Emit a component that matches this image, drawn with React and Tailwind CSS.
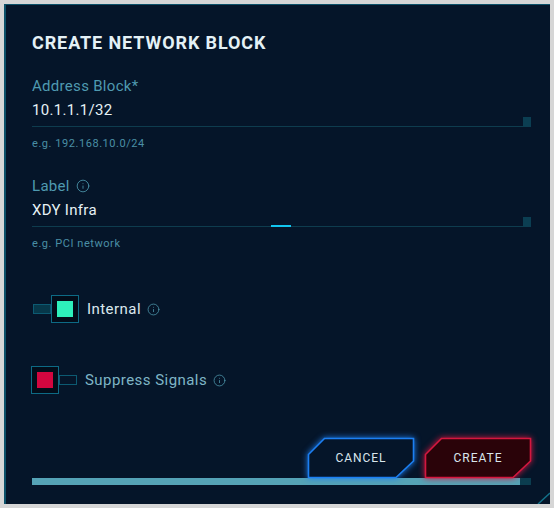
import { Info } from 'lucide-react';

const FONT = { fontFamily: 'Roboto, "Noto Sans", sans-serif' };

const Field = ({ label, value, hint, info, marker }) => (
  <div className="flex flex-col">
    <div className="flex items-center gap-1.5 text-[15px] leading-5 tracking-[0.02em] text-[#4f9ab0]">
      <span>{label}</span>
      {info && <Info size={14} strokeWidth={1.4} />}
    </div>
    <div className="relative mt-[3px] h-[28px] border-b border-[#0e3c4e]">
      <span className="block pt-[1px] text-[15px] leading-5 tracking-[0.02em] text-[#e6f1f5]">{value}</span>
      {marker && <div className="absolute bottom-[-1px] left-[239px] h-[2px] w-[20px] bg-[#12c6f0]" />}
      <div className="absolute bottom-[-1px] right-0 h-[10px] w-[8px] bg-[#0b3e52]" />
    </div>
    <span className="mt-[9px] text-[11px] leading-4 tracking-[0.05em] text-[#4a8fa5]">{hint}</span>
  </div>
);

const Toggle = ({ on, label }) => (
  <div className="flex items-center">
    <div className={`flex items-center ${on ? '' : 'flex-row-reverse'}`}>
      <div className={`h-[10px] w-[18px] border border-[#0c5a72] ${on ? 'bg-[#07384a]' : 'bg-transparent'}`} />
      <div className="flex h-[28px] w-[28px] items-center justify-center border border-[#0d6a85] bg-[#030d1a]">
        <div className={`h-[16px] w-[16px] ${on ? 'bg-[#2ef0bb]' : 'bg-[#d3063f]'}`} />
      </div>
    </div>
    <span className={`ml-[8px] text-[15px] tracking-[0.03em] ${on ? 'text-[#dbe8ee]' : 'text-[#7fb6c6]'}`}>{label}</span>
    <Info size={13} strokeWidth={1.4} className="ml-[6px] text-[#4f9ab0]" />
  </div>
);

const CutButton = ({ label, stroke, fill, glow }) => (
  <button className="relative h-[40px] w-[106px] text-[12px] tracking-[0.08em] text-[#d9e6ec]">
    <svg className="absolute inset-0" width="106" height="40" viewBox="0 0 106 40" style={{ filter: `drop-shadow(0 0 3px ${glow})`, overflow: 'visible' }}>
      <polygon points="16.5,0.5 105.5,0.5 105.5,23 88,39.5 0.5,39.5 0.5,16.5" fill={fill} stroke={stroke} strokeWidth="1.6" />
    </svg>
    <span className="relative">{label}</span>
  </button>
);

export default function App() {
  return (
    <div className="h-[508px] w-[554px] bg-[#d6d6d6] p-1" style={FONT}>
      <div className="relative flex h-full flex-col border-l-2 border-t border-[#0c5169] bg-[#051529] pl-[26px] pr-[19px]">
        <h1 className="mt-[24px] text-[18px] font-bold leading-7 tracking-[0.05em] text-[#e4f1f6]">CREATE NETWORK BLOCK</h1>

        <div className="mt-[19px]">
          <Field label="Address Block*" value="10.1.1.1/32" hint="e.g. 192.168.10.0/24" />
        </div>
        <div className="mt-[24px]">
          <Field label="Label" info value="XDY Infra" hint="e.g. PCI network" marker />
        </div>

        <div className="mt-[43px] pl-[1px]">
          <Toggle on label="Internal" />
        </div>
        <div className="mt-[43px] -ml-[1px]">
          <Toggle label="Suppress Signals" />
        </div>

        <div className="mt-auto mb-[19px] flex flex-col">
          <div className="flex justify-end gap-[11px]">
            <CutButton label="CANCEL" stroke="#1c7ff2" fill="#051529" glow="#1c7ff2" />
            <CutButton label="CREATE" stroke="#d4173f" fill="#2a0309" glow="#d4173f" />
          </div>
          <div className="flex h-[7px]">
            <div className="flex-1 bg-[#55a3b6]" />
            <div className="w-[11px] bg-[#0b3d4f]" />
          </div>
        </div>

        <svg className="absolute bottom-0 right-0" width="14" height="14" viewBox="0 0 14 14">
          <line x1="2" y1="14" x2="14" y2="3" stroke="#137089" strokeWidth="1.5" />
        </svg>
      </div>
    </div>
  );
}
